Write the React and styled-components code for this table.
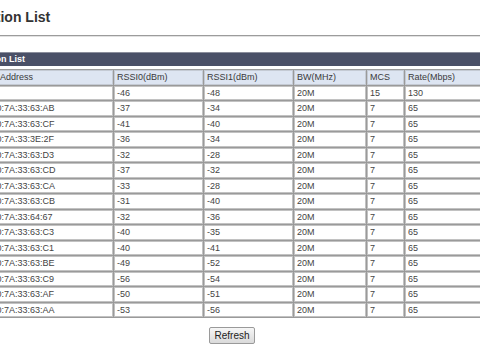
import React from 'react';
import styled, { createGlobalStyle } from 'styled-components';

const GlobalStyle = createGlobalStyle`
  body {
    margin: 0;
    overflow: hidden;
    background: #fff;
    font-family: "Liberation Sans", Arial, sans-serif;
  }
`;

const Page = styled.div`
  width: 520px;
  margin-left: -28px;
`;

const Title = styled.h1`
  margin: 0;
  padding: 8px 0 0 2px;
  height: 27px;
  font-size: 14px;
  line-height: 18px;
  font-weight: bold;
  color: #333;
`;

const Rule = styled.div`
  width: 100%;
  border-top: 1px solid #9c9c9c;
  border-bottom: 1px solid #e2e2e2;
`;

const Section = styled.div`
  margin-top: 15px;
`;

const SectionBar = styled.div`
  height: 13px;
  padding-left: 4px;
  background: #4a5067;
  border-top: 1px solid #8b8e9c;
  color: #fff;
  font-size: 9px;
  font-weight: bold;
  line-height: 13px;
`;

const Table = styled.table`
  margin: 3px 0 0 2px;
  width: 517px;
  table-layout: fixed;
  border-collapse: separate;
  border-spacing: 1px;
  background: #9a9a9a;
  font-size: 9px;
`;

const HeadCell = styled.th`
  box-sizing: border-box;
  width: ${(props) => props.w}px;
  padding: 0 2px;
  height: 14.5px;
  line-height: 12.5px;
  border: 1px solid #c4cad4;
  background: #dde5f2;
  color: #3a3a3a;
  font-weight: normal;
  text-align: left;
  white-space: nowrap;
  overflow: hidden;
`;

const Cell = styled.td`
  box-sizing: border-box;
  padding: 0 2px;
  height: 14.5px;
  line-height: 12.5px;
  border: 1px solid #c2c2c2;
  background: #fff;
  color: #444;
  white-space: nowrap;
  overflow: hidden;
`;

const Actions = styled.div`
  display: flex;
  justify-content: center;
  padding-top: 9px;
`;

const Button = styled.button`
  height: 17px;
  padding: 0 4px;
  border: 1px solid #9a9a9a;
  border-radius: 2px;
  background: linear-gradient(#f6f6f6, #dadada);
  color: #222;
  font-family: "Liberation Sans", Arial, sans-serif;
  font-size: 10px;
`;

const columns = [
  { name: 'MAC Address', w: 138 },
  { name: 'RSSI0(dBm)', w: 89 },
  { name: 'RSSI1(dBm)', w: 89 },
  { name: 'BW(MHz)', w: 72 },
  { name: 'MCS', w: 37 },
  { name: 'Rate(Mbps)', w: 85 },
];

const stations = [
  ['', '-46', '-48', '20M', '15', '130'],
  ['00:E0:7A:33:63:AB', '-37', '-34', '20M', '7', '65'],
  ['00:E0:7A:33:63:CF', '-41', '-40', '20M', '7', '65'],
  ['00:E0:7A:33:3E:2F', '-36', '-34', '20M', '7', '65'],
  ['00:E0:7A:33:63:D3', '-32', '-28', '20M', '7', '65'],
  ['00:E0:7A:33:63:CD', '-37', '-32', '20M', '7', '65'],
  ['00:E0:7A:33:63:CA', '-33', '-28', '20M', '7', '65'],
  ['00:E0:7A:33:63:CB', '-31', '-40', '20M', '7', '65'],
  ['00:E0:7A:33:64:67', '-32', '-36', '20M', '7', '65'],
  ['00:E0:7A:33:63:C3', '-40', '-35', '20M', '7', '65'],
  ['00:E0:7A:33:63:C1', '-40', '-41', '20M', '7', '65'],
  ['00:E0:7A:33:63:BE', '-49', '-52', '20M', '7', '65'],
  ['00:E0:7A:33:63:C9', '-56', '-54', '20M', '7', '65'],
  ['00:E0:7A:33:63:AF', '-50', '-51', '20M', '7', '65'],
  ['00:E0:7A:33:63:AA', '-53', '-56', '20M', '7', '65'],
];

const App = () => {
  return (
    <Page>
      <GlobalStyle />
      <Title>Station List</Title>
      <Rule />
      <Section>
        <SectionBar>Station List</SectionBar>
        <Table>
          <thead>
            <tr>
              {columns.map((c) => (
                <HeadCell key={c.name} w={c.w}>
                  {c.name}
                </HeadCell>
              ))}
            </tr>
          </thead>
          <tbody>
            {stations.map((row, i) => (
              <tr key={i}>
                {row.map((v, j) => (
                  <Cell key={j}>{v}</Cell>
                ))}
              </tr>
            ))}
          </tbody>
        </Table>
      </Section>
      <Actions>
        <Button>Refresh</Button>
      </Actions>
    </Page>
  );
};

export default App;
